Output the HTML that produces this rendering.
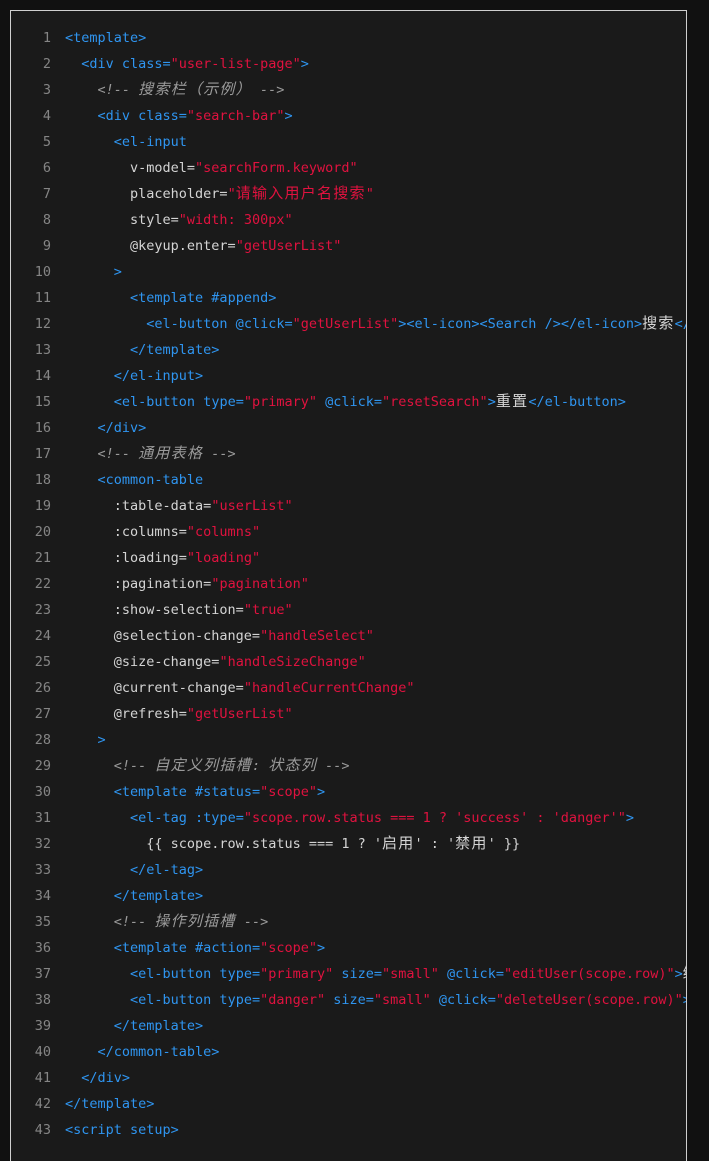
<!DOCTYPE html>
<html><head><meta charset="utf-8"><style>
html,body{margin:0;padding:0;background:#111;width:709px;height:1145px;overflow:hidden}
.panel{position:absolute;left:10px;top:10px;width:675px;height:1150px;border:1px solid #cfcfcf;border-bottom:none;background:#1a1a1a;overflow:hidden}
.ln{position:absolute;left:0;width:40px;text-align:right;color:#858585}
.code{position:absolute;left:54px;white-space:pre;color:#d4d4d4}
.row{position:absolute;height:26px;line-height:26px;font-family:"DejaVu Sans Mono","Liberation Mono","Noto Sans CJK SC",monospace;font-size:13.5px;width:1200px}
.t{color:#2f95f0}.s{color:#e0123f}.c{color:#9a9a9a;font-style:italic}
.z{font-size:15px;letter-spacing:1.25px;line-height:20px}
</style></head><body>
<div class="panel">
<div class="row" style="top:14px"><span class="ln">1</span><span class="code"><span class="t">&lt;template&gt;</span></span></div>
<div class="row" style="top:40px"><span class="ln">2</span><span class="code">  <span class="t">&lt;div class=</span><span class="s">"user-list-page"</span><span class="t">&gt;</span></span></div>
<div class="row" style="top:66px"><span class="ln">3</span><span class="code">    <span class="c">&lt;!-- <span class="z">搜索栏（示例）</span> --&gt;</span></span></div>
<div class="row" style="top:92px"><span class="ln">4</span><span class="code">    <span class="t">&lt;div class=</span><span class="s">"search-bar"</span><span class="t">&gt;</span></span></div>
<div class="row" style="top:118px"><span class="ln">5</span><span class="code">      <span class="t">&lt;el-input</span></span></div>
<div class="row" style="top:144px"><span class="ln">6</span><span class="code">        v-model=<span class="s">"searchForm.keyword"</span></span></div>
<div class="row" style="top:170px"><span class="ln">7</span><span class="code">        placeholder=<span class="s">"<span class="z">请输入用户名搜索</span>"</span></span></div>
<div class="row" style="top:196px"><span class="ln">8</span><span class="code">        style=<span class="s">"width: 300px"</span></span></div>
<div class="row" style="top:222px"><span class="ln">9</span><span class="code">        @keyup.enter=<span class="s">"getUserList"</span></span></div>
<div class="row" style="top:248px"><span class="ln">10</span><span class="code">      <span class="t">&gt;</span></span></div>
<div class="row" style="top:274px"><span class="ln">11</span><span class="code">        <span class="t">&lt;template #append&gt;</span></span></div>
<div class="row" style="top:300px"><span class="ln">12</span><span class="code">          <span class="t">&lt;el-button @click=</span><span class="s">"getUserList"</span><span class="t">&gt;&lt;el-icon&gt;&lt;Search /&gt;&lt;/el-icon&gt;</span><span class="z">搜索</span><span class="t">&lt;/el-button&gt;</span></span></div>
<div class="row" style="top:326px"><span class="ln">13</span><span class="code">        <span class="t">&lt;/template&gt;</span></span></div>
<div class="row" style="top:352px"><span class="ln">14</span><span class="code">      <span class="t">&lt;/el-input&gt;</span></span></div>
<div class="row" style="top:378px"><span class="ln">15</span><span class="code">      <span class="t">&lt;el-button type=</span><span class="s">"primary"</span><span class="t"> @click=</span><span class="s">"resetSearch"</span><span class="t">&gt;</span><span class="z">重置</span><span class="t">&lt;/el-button&gt;</span></span></div>
<div class="row" style="top:404px"><span class="ln">16</span><span class="code">    <span class="t">&lt;/div&gt;</span></span></div>
<div class="row" style="top:430px"><span class="ln">17</span><span class="code">    <span class="c">&lt;!-- <span class="z">通用表格</span> --&gt;</span></span></div>
<div class="row" style="top:456px"><span class="ln">18</span><span class="code">    <span class="t">&lt;common-table</span></span></div>
<div class="row" style="top:482px"><span class="ln">19</span><span class="code">      :table-data=<span class="s">"userList"</span></span></div>
<div class="row" style="top:508px"><span class="ln">20</span><span class="code">      :columns=<span class="s">"columns"</span></span></div>
<div class="row" style="top:534px"><span class="ln">21</span><span class="code">      :loading=<span class="s">"loading"</span></span></div>
<div class="row" style="top:560px"><span class="ln">22</span><span class="code">      :pagination=<span class="s">"pagination"</span></span></div>
<div class="row" style="top:586px"><span class="ln">23</span><span class="code">      :show-selection=<span class="s">"true"</span></span></div>
<div class="row" style="top:612px"><span class="ln">24</span><span class="code">      @selection-change=<span class="s">"handleSelect"</span></span></div>
<div class="row" style="top:638px"><span class="ln">25</span><span class="code">      @size-change=<span class="s">"handleSizeChange"</span></span></div>
<div class="row" style="top:664px"><span class="ln">26</span><span class="code">      @current-change=<span class="s">"handleCurrentChange"</span></span></div>
<div class="row" style="top:690px"><span class="ln">27</span><span class="code">      @refresh=<span class="s">"getUserList"</span></span></div>
<div class="row" style="top:716px"><span class="ln">28</span><span class="code">    <span class="t">&gt;</span></span></div>
<div class="row" style="top:742px"><span class="ln">29</span><span class="code">      <span class="c">&lt;!-- <span class="z">自定义列插槽</span>: <span class="z">状态列</span> --&gt;</span></span></div>
<div class="row" style="top:768px"><span class="ln">30</span><span class="code">      <span class="t">&lt;template #status=</span><span class="s">"scope"</span><span class="t">&gt;</span></span></div>
<div class="row" style="top:794px"><span class="ln">31</span><span class="code">        <span class="t">&lt;el-tag :type=</span><span class="s">"scope.row.status === 1 ? 'success' : 'danger'"</span><span class="t">&gt;</span></span></div>
<div class="row" style="top:820px"><span class="ln">32</span><span class="code">          {{ scope.row.status === 1 ? '<span class="z">启用</span>' : '<span class="z">禁用</span>' }}</span></div>
<div class="row" style="top:846px"><span class="ln">33</span><span class="code">        <span class="t">&lt;/el-tag&gt;</span></span></div>
<div class="row" style="top:872px"><span class="ln">34</span><span class="code">      <span class="t">&lt;/template&gt;</span></span></div>
<div class="row" style="top:898px"><span class="ln">35</span><span class="code">      <span class="c">&lt;!-- <span class="z">操作列插槽</span> --&gt;</span></span></div>
<div class="row" style="top:924px"><span class="ln">36</span><span class="code">      <span class="t">&lt;template #action=</span><span class="s">"scope"</span><span class="t">&gt;</span></span></div>
<div class="row" style="top:950px"><span class="ln">37</span><span class="code">        <span class="t">&lt;el-button type=</span><span class="s">"primary"</span><span class="t"> size=</span><span class="s">"small"</span><span class="t"> @click=</span><span class="s">"editUser(scope.row)"</span><span class="t">&gt;</span><span class="z">编辑</span></span></div>
<div class="row" style="top:976px"><span class="ln">38</span><span class="code">        <span class="t">&lt;el-button type=</span><span class="s">"danger"</span><span class="t"> size=</span><span class="s">"small"</span><span class="t"> @click=</span><span class="s">"deleteUser(scope.row)"</span><span class="t">&gt;</span><span class="z">删除</span></span></div>
<div class="row" style="top:1002px"><span class="ln">39</span><span class="code">      <span class="t">&lt;/template&gt;</span></span></div>
<div class="row" style="top:1028px"><span class="ln">40</span><span class="code">    <span class="t">&lt;/common-table&gt;</span></span></div>
<div class="row" style="top:1054px"><span class="ln">41</span><span class="code">  <span class="t">&lt;/div&gt;</span></span></div>
<div class="row" style="top:1080px"><span class="ln">42</span><span class="code"><span class="t">&lt;/template&gt;</span></span></div>
<div class="row" style="top:1106px"><span class="ln">43</span><span class="code"><span class="t">&lt;script setup&gt;</span></span></div>
</div>
</body></html>
